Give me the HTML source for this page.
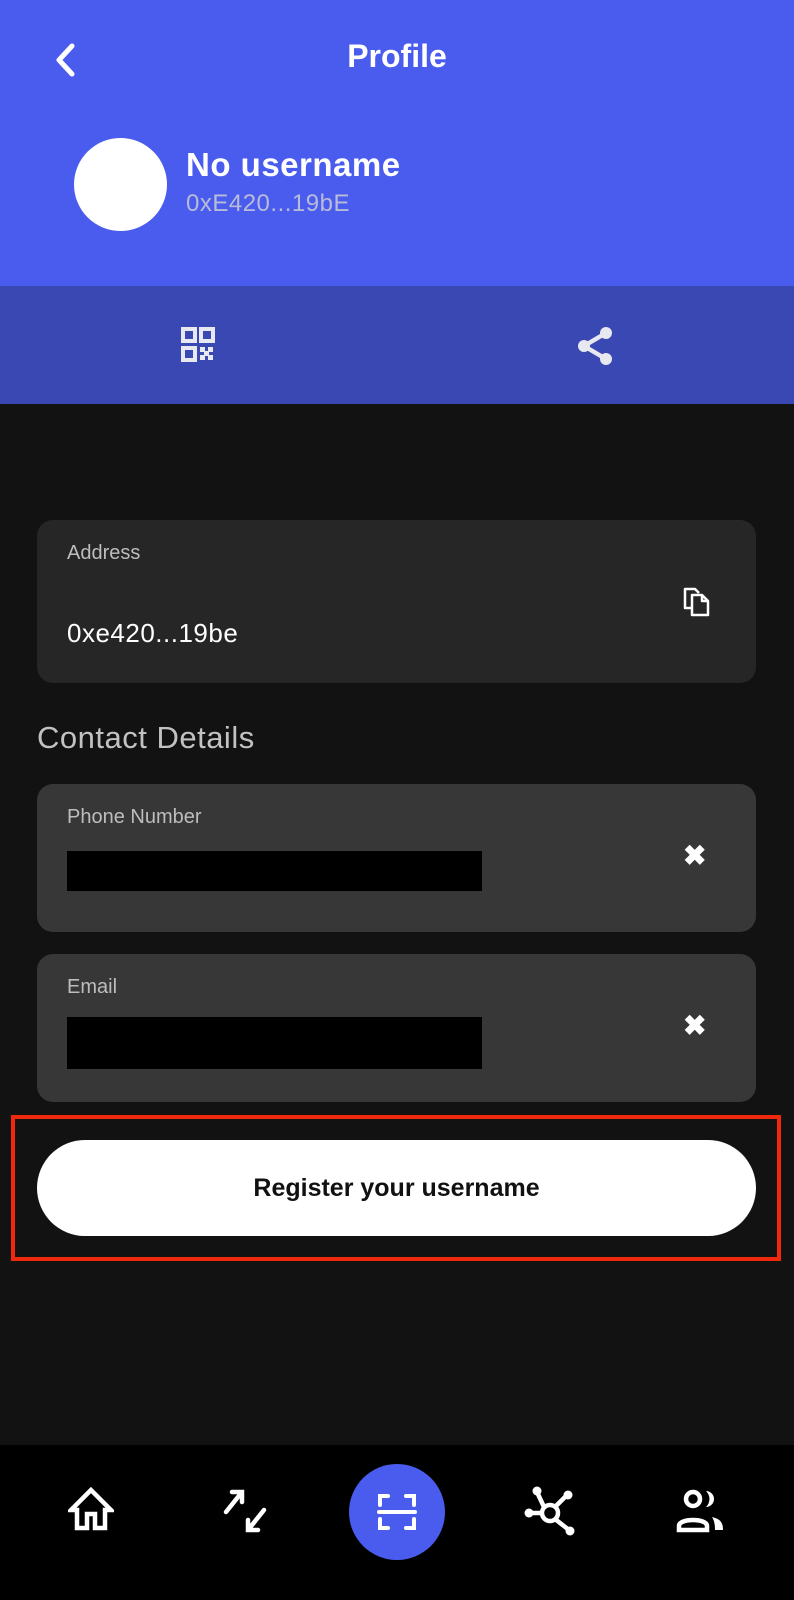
<!DOCTYPE html>
<html><head><meta charset="utf-8"><style>
*{margin:0;padding:0;box-sizing:border-box}
body{width:794px;height:1600px;background:#121212;font-family:"Liberation Sans",sans-serif;position:relative;overflow:hidden;color:#fff}
.a{position:absolute}
.card{position:absolute;left:37px;width:719px;border-radius:16px}
.lbl{position:absolute;left:30px;font-size:20px;color:#bdbdbd}
</style></head><body>
<div class="a" style="left:0;top:0;width:794px;height:286px;background:#4a5cee"></div>
<div class="a" style="left:0;top:286px;width:794px;height:118px;background:#3a48b3"></div>
<svg class="a" style="left:50px;top:42px" width="30" height="36" viewBox="0 0 30 36"><path d="M22 4 L9 18 L22 32" stroke="#fff" stroke-width="5" fill="none" stroke-linecap="round" stroke-linejoin="round"/></svg>
<div class="a" style="left:0;width:794px;top:38px;text-align:center;font-size:32px;font-weight:bold">Profile</div>
<div class="a" style="left:74px;top:138px;width:93px;height:93px;border-radius:50%;background:#fff"></div>
<div class="a" style="left:186px;top:146px;font-size:33px;font-weight:bold;letter-spacing:0.5px">No username</div>
<div class="a" style="left:186px;top:190px;font-size:24px;color:#b8bcd8;letter-spacing:0.5px">0xE420...19bE</div>
<svg class="a" style="left:181px;top:327px" width="34" height="36" viewBox="0 0 34 36"><g fill="none" stroke="#e8e8f0" stroke-width="4"><rect x="2" y="2" width="12" height="12"/><rect x="20" y="2" width="12" height="12"/><rect x="2" y="21" width="12" height="12"/></g><g fill="#e8e8f0"><rect x="19" y="20" width="5" height="5"/><rect x="27" y="20" width="5" height="5"/><rect x="23" y="24" width="5" height="5"/><rect x="19" y="28" width="5" height="5"/><rect x="27" y="28" width="5" height="5"/></g></svg>
<svg class="a" style="left:576px;top:326px" width="38" height="40" viewBox="0 0 38 40"><g fill="#e8e8f0"><circle cx="30" cy="7" r="6"/><circle cx="8" cy="20" r="6"/><circle cx="30" cy="33" r="6"/></g><path d="M30 7 L8 20 L30 33" stroke="#e8e8f0" stroke-width="4.5" fill="none"/></svg>
<div class="card" style="top:520px;height:163px;background:#262626"><div class="lbl" style="top:22px">Address</div><div class="a" style="left:30px;top:98px;font-size:26px;letter-spacing:0.5px">0xe420...19be</div>
<svg class="a" style="left:644px;top:66px" width="30" height="32" viewBox="0 0 30 32"><g fill="none" stroke="#fff" stroke-width="2.5" stroke-linejoin="round"><path d="M10 22 H4 V3 H14 L18 7"/><path d="M11 9 H21 L27 15 V29 H11 Z"/><path d="M21 9 V15 H27"/></g></svg></div>
<div class="a" style="left:37px;top:720px;font-size:31px;color:#c2c2c2;letter-spacing:0.5px">Contact Details</div>
<div class="card" style="top:784px;height:148px;background:#373737"><div class="lbl" style="top:22px">Phone Number</div><div class="a" style="left:30px;top:67px;width:415px;height:40px;background:#000"></div><div class="a" style="left:646px;top:55px;font-size:28px;font-weight:bold">✖</div></div>
<div class="card" style="top:954px;height:148px;background:#373737"><div class="lbl" style="top:22px">Email</div><div class="a" style="left:30px;top:63px;width:415px;height:52px;background:#000"></div><div class="a" style="left:646px;top:55px;font-size:28px;font-weight:bold">✖</div></div>
<div class="a" style="left:11px;top:1115px;width:770px;height:146px;border:4px solid #f0290e"></div>
<div class="a" style="left:37px;top:1140px;width:719px;height:96px;border-radius:48px;background:#fff;color:#111;font-size:25px;text-align:center;line-height:96px;font-weight:bold">Register your username</div>
<div class="a" style="left:0;top:1445px;width:794px;height:155px;background:#000"></div>
<svg class="a" style="left:68px;top:1486px" width="46" height="46" viewBox="0 0 46 46"><path d="M23 4 L3 24 H9 V42 H19 V28 H27 V42 H37 V24 H43 Z" fill="none" stroke="#fff" stroke-width="4.5" stroke-linejoin="miter"/></svg>
<svg class="a" style="left:222px;top:1488px" width="46" height="46" viewBox="0 0 46 46"><g stroke="#fff" stroke-width="4.5" fill="none" stroke-linecap="round"><path d="M4 24 L20 4 M10 4 H20 V14"/><path d="M42 22 L26 42 M36 42 H26 V32"/></g></svg>
<div class="a" style="left:349px;top:1464px;width:96px;height:96px;border-radius:50%;background:#4a5cee"></div>
<svg class="a" style="left:377px;top:1492px" width="40" height="40" viewBox="0 0 40 40"><g stroke="#fff" stroke-width="4" fill="none" stroke-linecap="round"><path d="M3 13 V4 H11 M29 4 H37 V13 M3 27 V36 H11 M29 36 H37 V27"/><path d="M2 20 H38"/></g></svg>
<svg class="a" style="left:524px;top:1486px" width="52" height="50" viewBox="0 0 52 50"><g stroke="#fff" stroke-width="4.5" fill="none"><circle cx="26" cy="27" r="8"/><path d="M18 27 H6 M20 21 L13 6 M31 21 L42 10 M31 33 L45 44"/></g><g fill="#fff"><circle cx="5" cy="27" r="4.5"/><circle cx="13" cy="5" r="4.5"/><circle cx="44" cy="9" r="4.5"/><circle cx="46" cy="45" r="4.5"/></g></svg>
<svg class="a" style="left:676px;top:1488px" width="50" height="46" viewBox="0 0 50 46"><g fill="none" stroke="#fff" stroke-width="4.5"><circle cx="17" cy="11" r="7"/><path d="M3 42 V38 C3 30 31 30 31 38 V42 Z"/></g><g fill="#fff"><path d="M30 3 A8 8 0 0 1 30 19 A11 11 0 0 0 30 3Z"/><path d="M36 29 C44 31 47 34 47 42 H39 C39 36 38 32 36 29Z"/></g></svg>
</body></html>
